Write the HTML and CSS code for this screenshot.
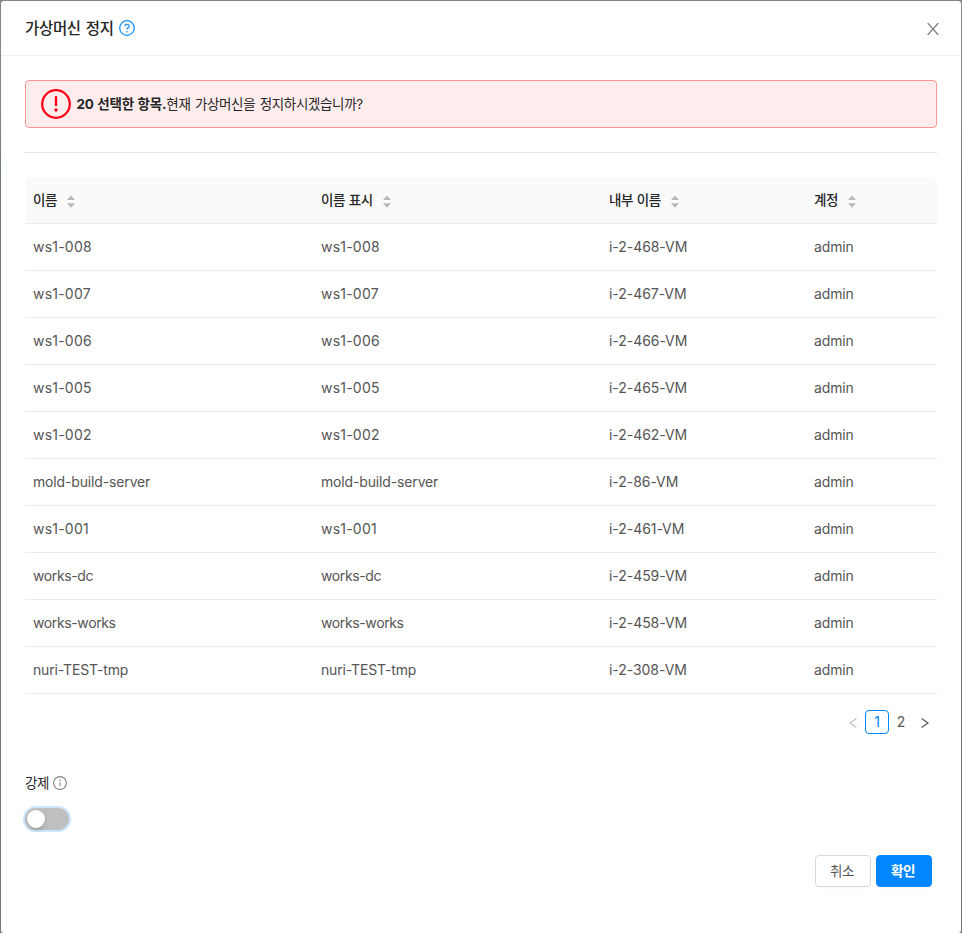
FILE: index.html
```html
<!DOCTYPE html>
<html lang="ko">
<head>
<meta charset="utf-8">
<title>가상머신 정지</title>
<link rel="stylesheet" href="styles.css">
</head>
<body>
<svg class="defs" width="0" height="0" aria-hidden="true">
  <symbol id="sorter" viewBox="0 0 8 13"><path d="M4 0.4L8 5H0ZM4 12.8L0 8.2H8Z"/></symbol>
</svg>
<main class="modal">
  <header class="modal-header">
    <h1 class="title">가상머신 정지</h1>
    <svg class="help" viewBox="0 0 16 16"><circle cx="8" cy="8" r="7.3"/><path d="M5.8 6.3C5.8 5.1 6.7 4.3 8 4.3S10.2 5.1 10.2 6.2C10.2 7.1 9.6 7.6 9 7.9C8.4 8.2 8 8.5 8 9.1V9.6"/><circle class="dot" cx="8" cy="11.7" r=".8"/></svg>
    <svg class="close" viewBox="0 0 12 12"><path d="M.7 0L11.3 12M11.3 0L.7 12"/></svg>
  </header>
  <section class="modal-body">
    <div class="alert">
      <svg class="warning" viewBox="0 0 30 30"><circle cx="15" cy="15" r="13.8"/><path d="M15 7.2V17"/><circle class="dot" cx="15" cy="21" r="1.7"/></svg>
      <p class="message"><b>20 선택한 항목.</b><span>현재 가상머신을 정지하시겠습니까?</span></p>
    </div>
    <hr class="divider">
    <table class="table">
      <colgroup><col class="col-name"><col class="col-name"><col class="col-internal"><col></colgroup>
      <thead>
        <tr>
          <th><div class="head"><span>이름</span><svg><use href="#sorter"/></svg></div></th>
          <th><div class="head"><span>이름 표시</span><svg><use href="#sorter"/></svg></div></th>
          <th><div class="head"><span>내부 이름</span><svg><use href="#sorter"/></svg></div></th>
          <th><div class="head"><span>계정</span><svg><use href="#sorter"/></svg></div></th>
        </tr>
      </thead>
      <tbody>
        <tr><td class="loose">ws1-008</td><td class="loose">ws1-008</td><td class="id">i-2-468-VM</td><td>admin</td></tr>
        <tr><td class="loose">ws1-007</td><td class="loose">ws1-007</td><td class="id">i-2-467-VM</td><td>admin</td></tr>
        <tr><td class="loose">ws1-006</td><td class="loose">ws1-006</td><td class="id">i-2-466-VM</td><td>admin</td></tr>
        <tr><td class="loose">ws1-005</td><td class="loose">ws1-005</td><td class="id">i-2-465-VM</td><td>admin</td></tr>
        <tr><td class="loose">ws1-002</td><td class="loose">ws1-002</td><td class="id">i-2-462-VM</td><td>admin</td></tr>
        <tr><td>mold-build-server</td><td>mold-build-server</td><td class="id">i-2-86-VM</td><td>admin</td></tr>
        <tr><td class="loose">ws1-001</td><td class="loose">ws1-001</td><td class="id">i-2-461-VM</td><td>admin</td></tr>
        <tr><td class="tight">works-dc</td><td class="tight">works-dc</td><td class="id">i-2-459-VM</td><td>admin</td></tr>
        <tr><td class="tight">works-works</td><td class="tight">works-works</td><td class="id">i-2-458-VM</td><td>admin</td></tr>
        <tr><td>nuri-TEST-tmp</td><td>nuri-TEST-tmp</td><td class="id">i-2-308-VM</td><td>admin</td></tr>
      </tbody>
    </table>
    <nav class="pagination">
      <span class="page disabled"><svg viewBox="0 0 8 10"><path d="M7.4 .6L1 5L7.4 9.4"/></svg></span>
      <span class="page active">1</span>
      <span class="page">2</span>
      <span class="page"><svg viewBox="0 0 8 10"><path d="M.6 .6L7 5L.6 9.4"/></svg></span>
    </nav>
    <div class="field">
      <span class="label">강제</span>
      <svg class="info" viewBox="0 0 14 14"><circle cx="7" cy="7" r="6.4"/><path d="M7 6.2V10.2"/><circle class="dot" cx="7" cy="4.3" r=".75"/></svg>
    </div>
    <div class="switch"><span class="knob"></span></div>
    <footer class="actions">
      <button class="button">취소</button>
      <button class="button primary">확인</button>
    </footer>
  </section>
</main>
</body>
</html>
```
FILE: styles.css
```css
* { box-sizing: border-box; }
body {
  margin: 0;
  height: 933px;
  padding: 1px 1px 0;
  overflow: hidden;
  background: linear-gradient(#858585 0, #858585 110px, #6f7a80 180px, #6f7a80 100%);
  font-family: Inter, "Noto Sans CJK KR", sans-serif;
  font-size: 14px;
  line-height: 22px;
  color: #262626;
}
.defs { position: absolute; }
svg { display: block; flex: none; fill: none; stroke: currentColor; }
.dot { fill: currentColor; stroke: none; }
.modal { height: 932px; background: #fff; border-radius: 3px; }
.modal-header {
  display: flex;
  align-items: center;
  height: 55px;
  padding: 0 22px 0 24px;
  border-bottom: 1px solid #f0f0f0;
}
.title { margin: 2px 0 0; font-size: 15.5px; line-height: 24px; font-weight: 500; letter-spacing: -.32px; word-spacing: 1.3px; }
.help { width: 16px; height: 16px; margin-left: 5px; color: #1890ff; stroke-width: 1.3; }
.close { width: 12px; height: 12px; margin-left: auto; margin-top: 2px; color: #858585; stroke-width: 1.4; }
.modal-body { padding: 24px 24px 0; }
.alert {
  display: flex;
  align-items: center;
  height: 48px;
  padding-left: 15px;
  border: 1px solid #ff9494;
  border-radius: 4px;
  background: #ffeded;
}
.warning { width: 30px; height: 30px; color: #ff0018; stroke-width: 2.3; }
.message { margin: 0 0 0 5.5px; font-size: 13.5px; letter-spacing: -.35px; word-spacing: 1px; white-space: nowrap; }
.message b { font-weight: 700; letter-spacing: -.16px; word-spacing: .4px; }
.divider { height: 1px; margin: 24px 0; border: 0; background: #e2e2e2; }
.table { width: 100%; table-layout: fixed; border-collapse: separate; border-spacing: 0; }
.col-name { width: 288px; }
.col-internal { width: 205px; }
th, td { height: 47px; padding: 0 8px; border-bottom: 1px solid #ececec; text-align: left; }
th { background: #fafafa; font-size: 13.5px; font-weight: 500; letter-spacing: -.35px; word-spacing: .4px; }
th:first-child { border-top-left-radius: 4px; }
th:last-child { border-top-right-radius: 4px; }
td { color: #555; letter-spacing: -.15px; }
.loose { letter-spacing: .22px; }
.id { letter-spacing: -.05px; }
.tight { letter-spacing: -.38px; }
.head { display: flex; align-items: center; gap: 10px; }
.head svg { width: 8px; height: 13px; margin-top: 3px; fill: #b8b8b8; stroke: none; }
.pagination { display: flex; justify-content: flex-end; height: 24px; margin-top: 16px; }
.page { display: flex; align-items: center; justify-content: center; width: 24px; height: 24px; color: #555; }
.page svg { width: 8px; height: 10px; margin-top: 2px; stroke-width: 1.2; }
.active { border: 1px solid #0087ff; border-radius: 4px; color: #0087ff; }
.disabled { color: #bfbfbf; }
.field { display: flex; align-items: center; gap: 4px; height: 22px; margin-top: 38px; }
.label { font-size: 13.5px; letter-spacing: -.35px; }
.info { width: 14px; height: 14px; color: #858585; stroke-width: 1.1; }
.switch {
  width: 44px;
  height: 22px;
  margin-top: 14px;
  padding: 2px;
  border-radius: 11px;
  background: #bfbfbf;
  box-shadow: 0 0 0 2px #cce6ff;
}
.knob { display: block; width: 18px; height: 18px; border-radius: 50%; background: #fff; box-shadow: 0 2px 4px rgba(0, 35, 11, .2); }
.actions { display: flex; justify-content: flex-end; gap: 5px; margin: 25px 5px 0 0; }
.button {
  width: 56px;
  height: 32px;
  padding: 0 2px 1px 0;
  border: 1px solid #d9d9d9;
  border-radius: 4px;
  background: #fff;
  color: #555;
  font: inherit;
  font-size: 13.5px;
  letter-spacing: -.35px;
  box-shadow: 0 2px 0 rgba(0, 0, 0, .015);
}
.primary { border-color: #0087ff; background: #0087ff; color: #fff; font-weight: 700; }
```
